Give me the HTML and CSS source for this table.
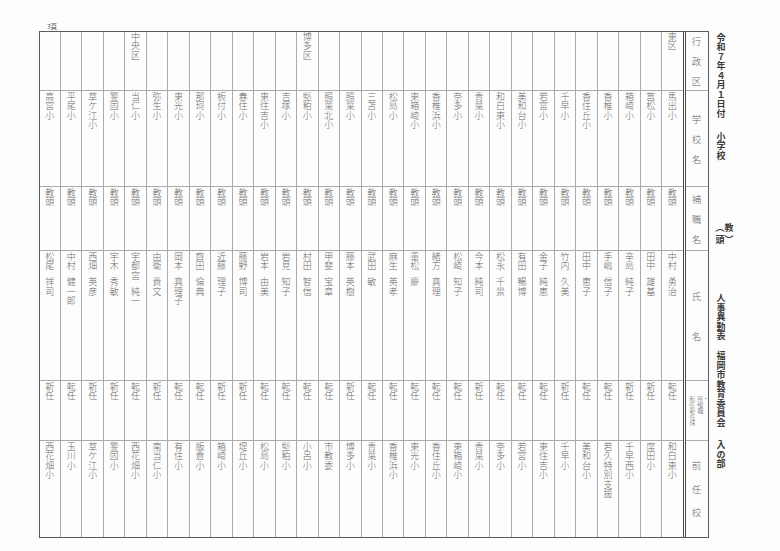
FILE: index.html
```html
<!DOCTYPE html>
<html lang="ja">
<head>
<meta charset="utf-8">
<title>人事異動表</title>
<link rel="stylesheet" href="styles.css">
</head>
<body>
<div class="page">
  <div class="pageno">3頁</div>
  <div class="sheet">
    <div class="table">
      <div class="rec"><div class="c ward"></div><div class="c school"><span class="v">高宮小</span></div><div class="c post"><span class="v">教頭</span></div><div class="c name"><span class="v">松尾</span><span class="v gn">祥司</span></div><div class="c kind"><span class="v">新任</span></div><div class="c prev"><span class="v">西花畑小</span></div></div>
      <div class="rec"><div class="c ward"></div><div class="c school"><span class="v">平尾小</span></div><div class="c post"><span class="v">教頭</span></div><div class="c name"><span class="v">中村</span><span class="v gn">健一郎</span></div><div class="c kind"><span class="v">転任</span></div><div class="c prev"><span class="v">玉川小</span></div></div>
      <div class="rec"><div class="c ward"></div><div class="c school"><span class="v">草ケ江小</span></div><div class="c post"><span class="v">教頭</span></div><div class="c name"><span class="v">西畑</span><span class="v gn">英彦</span></div><div class="c kind"><span class="v">新任</span></div><div class="c prev"><span class="v">草ケ江小</span></div></div>
      <div class="rec"><div class="c ward"></div><div class="c school"><span class="v">警固小</span></div><div class="c post"><span class="v">教頭</span></div><div class="c name"><span class="v">宇木</span><span class="v gn">秀敏</span></div><div class="c kind"><span class="v">新任</span></div><div class="c prev"><span class="v">警固小</span></div></div>
      <div class="rec"><div class="c ward"><span class="v">中央区</span></div><div class="c school"><span class="v">当仁小</span></div><div class="c post"><span class="v">教頭</span></div><div class="c name"><span class="v">宇都宮</span><span class="v gn">純一</span></div><div class="c kind"><span class="v">転任</span></div><div class="c prev"><span class="v">西花畑小</span></div></div>
      <div class="rec"><div class="c ward"></div><div class="c school"><span class="v">弥生小</span></div><div class="c post"><span class="v">教頭</span></div><div class="c name"><span class="v">由衛</span><span class="v gn">貴文</span></div><div class="c kind"><span class="v">新任</span></div><div class="c prev"><span class="v">南当仁小</span></div></div>
      <div class="rec"><div class="c ward"></div><div class="c school"><span class="v">東光小</span></div><div class="c post"><span class="v">教頭</span></div><div class="c name"><span class="v">岡本</span><span class="v gn">真理子</span></div><div class="c kind"><span class="v">転任</span></div><div class="c prev"><span class="v">有住小</span></div></div>
      <div class="rec"><div class="c ward"></div><div class="c school"><span class="v">那珂小</span></div><div class="c post"><span class="v">教頭</span></div><div class="c name"><span class="v">齊田</span><span class="v gn">倫典</span></div><div class="c kind"><span class="v">転任</span></div><div class="c prev"><span class="v">飯倉小</span></div></div>
      <div class="rec"><div class="c ward"></div><div class="c school"><span class="v">板付小</span></div><div class="c post"><span class="v">教頭</span></div><div class="c name"><span class="v">近藤</span><span class="v gn">理子</span></div><div class="c kind"><span class="v">新任</span></div><div class="c prev"><span class="v">箱崎小</span></div></div>
      <div class="rec"><div class="c ward"></div><div class="c school"><span class="v">春住小</span></div><div class="c post"><span class="v">教頭</span></div><div class="c name"><span class="v">藤野</span><span class="v gn">博司</span></div><div class="c kind"><span class="v">新任</span></div><div class="c prev"><span class="v">堤丘小</span></div></div>
      <div class="rec"><div class="c ward"></div><div class="c school"><span class="v">東住吉小</span></div><div class="c post"><span class="v">教頭</span></div><div class="c name"><span class="v">岩本</span><span class="v gn">由美</span></div><div class="c kind"><span class="v">転任</span></div><div class="c prev"><span class="v">松島小</span></div></div>
      <div class="rec"><div class="c ward"></div><div class="c school"><span class="v">吉塚小</span></div><div class="c post"><span class="v">教頭</span></div><div class="c name"><span class="v">岩見</span><span class="v gn">知子</span></div><div class="c kind"><span class="v">転任</span></div><div class="c prev"><span class="v">堅粕小</span></div></div>
      <div class="rec"><div class="c ward"><span class="v">博多区</span></div><div class="c school"><span class="v">堅粕小</span></div><div class="c post"><span class="v">教頭</span></div><div class="c name"><span class="v">村田</span><span class="v gn">智信</span></div><div class="c kind"><span class="v">転任</span></div><div class="c prev"><span class="v">小呂小</span></div></div>
      <div class="rec"><div class="c ward"></div><div class="c school"><span class="v">照葉北小</span></div><div class="c post"><span class="v">教頭</span></div><div class="c name"><span class="v">甲斐</span><span class="v gn">宝章</span></div><div class="c kind"><span class="v">転任</span></div><div class="c prev"><span class="v">市教委</span></div></div>
      <div class="rec"><div class="c ward"></div><div class="c school"><span class="v">照葉小</span></div><div class="c post"><span class="v">教頭</span></div><div class="c name"><span class="v">藤本</span><span class="v gn">英樹</span></div><div class="c kind"><span class="v">新任</span></div><div class="c prev"><span class="v">博多小</span></div></div>
      <div class="rec"><div class="c ward"></div><div class="c school"><span class="v">三苫小</span></div><div class="c post"><span class="v">教頭</span></div><div class="c name"><span class="v">武田</span><span class="v gn">敏</span></div><div class="c kind"><span class="v">転任</span></div><div class="c prev"><span class="v">青葉小</span></div></div>
      <div class="rec"><div class="c ward"></div><div class="c school"><span class="v">松島小</span></div><div class="c post"><span class="v">教頭</span></div><div class="c name"><span class="v">麻生</span><span class="v gn">英孝</span></div><div class="c kind"><span class="v">転任</span></div><div class="c prev"><span class="v">香椎浜小</span></div></div>
      <div class="rec"><div class="c ward"></div><div class="c school"><span class="v">東箱崎小</span></div><div class="c post"><span class="v">教頭</span></div><div class="c name"><span class="v">重松</span><span class="v gn">慶</span></div><div class="c kind"><span class="v">転任</span></div><div class="c prev"><span class="v">東光小</span></div></div>
      <div class="rec"><div class="c ward"></div><div class="c school"><span class="v">香椎浜小</span></div><div class="c post"><span class="v">教頭</span></div><div class="c name"><span class="v">緒方</span><span class="v gn">真理</span></div><div class="c kind"><span class="v">転任</span></div><div class="c prev"><span class="v">香住丘小</span></div></div>
      <div class="rec"><div class="c ward"></div><div class="c school"><span class="v">奈多小</span></div><div class="c post"><span class="v">教頭</span></div><div class="c name"><span class="v">松崎</span><span class="v gn">知子</span></div><div class="c kind"><span class="v">転任</span></div><div class="c prev"><span class="v">東箱崎小</span></div></div>
      <div class="rec"><div class="c ward"></div><div class="c school"><span class="v">青葉小</span></div><div class="c post"><span class="v">教頭</span></div><div class="c name"><span class="v">今本</span><span class="v gn">純司</span></div><div class="c kind"><span class="v">新任</span></div><div class="c prev"><span class="v">青葉小</span></div></div>
      <div class="rec"><div class="c ward"></div><div class="c school"><span class="v">和白東小</span></div><div class="c post"><span class="v">教頭</span></div><div class="c name"><span class="v">松永</span><span class="v gn">千景</span></div><div class="c kind"><span class="v">転任</span></div><div class="c prev"><span class="v">奈多小</span></div></div>
      <div class="rec"><div class="c ward"></div><div class="c school"><span class="v">美和台小</span></div><div class="c post"><span class="v">教頭</span></div><div class="c name"><span class="v">有田</span><span class="v gn">暢博</span></div><div class="c kind"><span class="v">転任</span></div><div class="c prev"><span class="v">若宮小</span></div></div>
      <div class="rec"><div class="c ward"></div><div class="c school"><span class="v">若宮小</span></div><div class="c post"><span class="v">教頭</span></div><div class="c name"><span class="v">金子</span><span class="v gn">純恵</span></div><div class="c kind"><span class="v">転任</span></div><div class="c prev"><span class="v">東住吉小</span></div></div>
      <div class="rec"><div class="c ward"></div><div class="c school"><span class="v">千早小</span></div><div class="c post"><span class="v">教頭</span></div><div class="c name"><span class="v">竹内</span><span class="v gn">久美</span></div><div class="c kind"><span class="v">新任</span></div><div class="c prev"><span class="v">千早小</span></div></div>
      <div class="rec"><div class="c ward"></div><div class="c school"><span class="v">香住丘小</span></div><div class="c post"><span class="v">教頭</span></div><div class="c name"><span class="v">田中</span><span class="v gn">恵子</span></div><div class="c kind"><span class="v">転任</span></div><div class="c prev"><span class="v">美和台小</span></div></div>
      <div class="rec"><div class="c ward"></div><div class="c school"><span class="v">香椎小</span></div><div class="c post"><span class="v">教頭</span></div><div class="c name"><span class="v">手嶋</span><span class="v gn">信子</span></div><div class="c kind"><span class="v">転任</span></div><div class="c prev"><span class="v">若久特別支援</span></div></div>
      <div class="rec"><div class="c ward"></div><div class="c school"><span class="v">箱崎小</span></div><div class="c post"><span class="v">教頭</span></div><div class="c name"><span class="v">辛島</span><span class="v gn">純子</span></div><div class="c kind"><span class="v">新任</span></div><div class="c prev"><span class="v">千早西小</span></div></div>
      <div class="rec"><div class="c ward"></div><div class="c school"><span class="v">筥松小</span></div><div class="c post"><span class="v">教頭</span></div><div class="c name"><span class="v">田中</span><span class="v gn">雄基</span></div><div class="c kind"><span class="v">新任</span></div><div class="c prev"><span class="v">席田小</span></div></div>
      <div class="rec last"><div class="c ward"><span class="v">東区</span></div><div class="c school"><span class="v">馬出小</span></div><div class="c post"><span class="v">教頭</span></div><div class="c name"><span class="v">中村</span><span class="v gn">勇治</span></div><div class="c kind"><span class="v">転任</span></div><div class="c prev"><span class="v">和白東小</span></div></div>
      <div class="hdr">
        <div class="h ward g10"><span>行</span><span>政</span><span>区</span></div>
        <div class="h school g10"><span>学</span><span>校</span><span>名</span></div>
        <div class="h post g10"><span>補</span><span>職</span><span>名</span></div>
        <div class="h name g30"><span>氏</span><span>名</span></div>
        <div class="h kind"><div class="tiny">転任・新任採用・復職</div></div>
        <div class="h prev g13"><span>前</span><span>任</span><span>校</span></div>
      </div>
    </div>
    <div class="title">
      <span class="t t1">令和７年４月１日付</span>
      <span class="t t2">小学校</span>
      <span class="t t3">︵教</span>
      <span class="t t3b">頭︶</span>
      <span class="t t4">人事異動表</span>
      <span class="t t5">福岡市教育委員会</span>
      <span class="t t6">入の部</span>
    </div>
  </div>
</div>
</body>
</html>
```

FILE: styles.css
```css
html, body {
  margin: 0;
  padding: 0;
  background: #fdfdfd;
}

body {
  font-family: "Noto Sans CJK JP", "Noto Sans", sans-serif;
  color: #6a6a6a;
}

.page {
  width: 780px;
  height: 551px;
  padding-top: 21px;
  box-sizing: border-box;
}

.pageno {
  height: 10px;
  line-height: 10px;
  margin-left: 47px;
  font-size: 6.5px;
  color: #555;
}

.sheet {
  display: flex;
  align-items: flex-start;
  margin-left: 38.5px;
}

.table {
  display: flex;
  width: 670px;
  height: 507px;
  box-sizing: border-box;
  border: 1.5px solid #5a5a5a;
}

.rec {
  flex: 1 1 0;
  min-width: 0;
  display: flex;
  flex-direction: column;
  border-right: 1px solid #ababab;
}

.rec.last {
  border-right: none;
}

.c {
  box-sizing: border-box;
  border-bottom: 1px solid #ababab;
  display: flex;
  flex-direction: column;
  align-items: center;
  justify-content: flex-start;
  padding-top: 1px;
}

.ward { height: 59px; }
.school { height: 96px; }
.post { height: 64px; }
.name { height: 130px; }
.kind { height: 60px; }
.prev { height: 95px; border-bottom: none; }

.c.ward { padding-top: 0; }

/* vertical stacking: one glyph per line */
.v {
  display: block;
  width: 10px;
  font-size: 9px;
  line-height: 9.4px;
  text-align: center;
  word-break: break-all;
  font-weight: 300;
}

.gn {
  margin-top: 6.5px;
}

.hdr {
  width: 22px;
  flex: none;
  display: flex;
  flex-direction: column;
  border-left: 3px double #4a4a4a;
}

.h {
  box-sizing: border-box;
  border-bottom: 1px solid #ababab;
  display: flex;
  flex-direction: column;
  align-items: center;
  justify-content: center;
  font-size: 9.5px;
  line-height: 10px;
  color: #666;
  font-weight: 300;
}

.h.prev { border-bottom: none; }

.g10 { gap: 10px; }
.g30 { gap: 30px; }
.g13 { gap: 13.5px; }

/* tiny two-column label: one text flowing into two columns */
.tiny {
  flex: none;
  width: 15px;
  height: 30px;
  column-count: 2;
  column-gap: 1px;
  column-fill: auto;
  font-size: 6px;
  line-height: 6px;
  text-align: center;
  word-break: break-all;
}

.title {
  width: 25px;
  flex: none;
  display: flex;
  flex-direction: column;
  align-items: center;
}

.t {
  display: block;
  width: 11px;
  font-size: 9px;
  line-height: 9.5px;
  text-align: center;
  word-break: break-all;
  font-weight: 700;
  color: #3a3a3a;
}

.t1 { margin-top: 1.5px; }
.t2 { margin-top: 13.5px; }
.t3 { margin-top: 63px; }
.t3b { margin-top: 2px; }
.t4 { margin-top: 49px; }
.t5 { margin-top: 10.5px; }
.t6 { margin-top: 13px; }
```
